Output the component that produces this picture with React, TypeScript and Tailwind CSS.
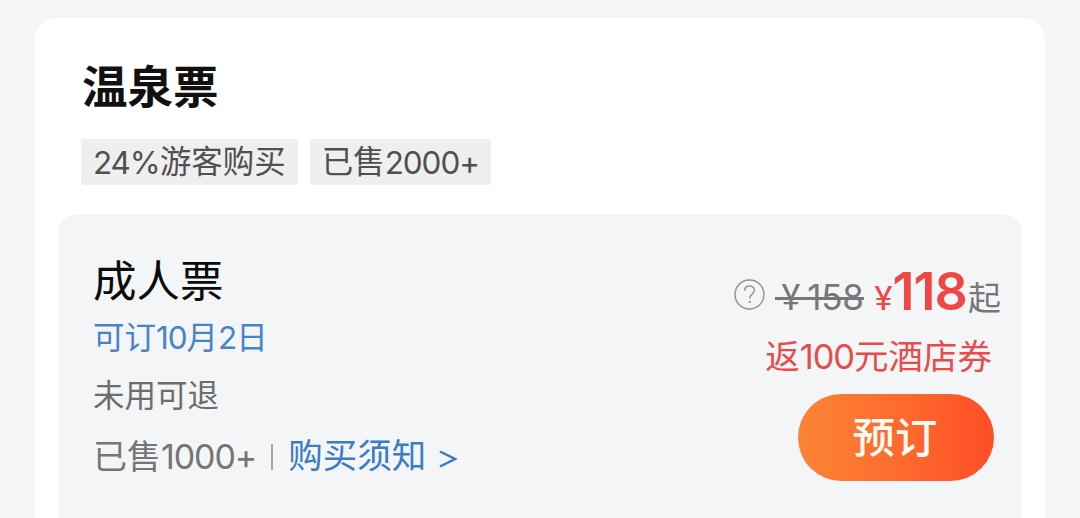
import type { ReactNode } from "react";

const Num = ({ children }: { children: ReactNode }) => (
  <span className="font-['Inter'] tracking-[-1.1px]">{children}</span>
);

const Tag = ({ children }: { children: ReactNode }) => (
  <span className="flex h-[46px] items-center rounded-[3px] bg-[#efefef] px-3 pt-px text-[31.5px] text-[#505050]">
    {children}
  </span>
);

export default function App() {
  return (
    <main className="h-[518px] w-[1080px] overflow-hidden bg-[#f5f5f5] px-[35px] pt-[18px] font-['Roboto','Noto_Sans_CJK_SC',sans-serif] whitespace-nowrap">
      <section className="h-[520px] rounded-t-[22px] bg-white px-[23px] pt-[40px]">
        <h1 className="ml-[24px] h-[62px] text-[45.5px] leading-[62px] font-bold text-[#111]">
          温泉票
        </h1>

        <div className="mt-[19px] ml-[23px] flex gap-3">
          <Tag>
            <Num>24%</Num>游客购买
          </Tag>
          <Tag>
            已售<Num>2000+</Num>
          </Tag>
        </div>

        <div className="mt-[29px] flex h-[320px] w-[964px] justify-between rounded-t-[20px] bg-[#f3f5f7] pr-[21px] pl-[35px]">
          <div className="pt-[39px]">
            <h2 className="h-[59px] text-[43.5px] leading-[60px] text-[#0c0c0c]">
              成人票
            </h2>
            <p className="h-[53px] text-[31.5px] leading-[52px] text-[#4783c8]">
              可订<Num>10</Num>月<Num>2</Num>日
            </p>
            <p className="h-[63px] text-[31.5px] leading-[63px] text-[#6d6d6d]">
              未用可退
            </p>
            <div className="flex h-[58px] items-center text-[34px] text-[#757575]">
              <span>
                已售<Num>1000+</Num>
              </span>
              <span className="mx-[15px] h-[26px] w-[2px] bg-[#a4a6a8]" />
              <a className="text-[34.5px] text-[#3b7cc9]">购买须知</a>
              <svg
                className="mt-[3px] ml-[13px] h-[18px] w-[18px]"
                viewBox="0 0 18 18"
                fill="none"
                stroke="#3b7cc9"
                strokeWidth="2.5"
              >
                <path d="M1 1.5 16 9 1 16.5" />
              </svg>
            </div>
          </div>

          <div className="flex flex-col items-end pt-[47px]">
            <div className="flex h-[67px] items-baseline text-[#777]">
              <svg
                className="mr-[10px] h-[31px] w-[31px] self-center"
                viewBox="0 0 31 31"
                fill="none"
                stroke="#929496"
                strokeWidth="1.5"
              >
                <circle cx="15.5" cy="15.5" r="14.5" />
                <path d="M10.8 11.7c0-3 2-4.7 4.8-4.7s4.8 1.8 4.8 4.3c0 3.7-4.7 4.1-4.7 8.2" />
                <path d="M15.7 22v2" strokeWidth="2" />
              </svg>
              <span className="relative mr-[11px] flex pl-[6px] font-['Inter'] text-[35px] leading-[62px] tracking-[-0.3px]">
                ¥<span className="ml-[7px]">158</span>
                <span className="absolute top-[31px] left-0 h-[3px] w-full bg-[#777]" />
              </span>
              <span className="text-[34px] text-[#ee4744]">¥</span>
              <span className="font-['Inter'] text-[52px] leading-[62px] font-semibold tracking-[-0.9px] text-[#ee4744]">
                118
              </span>
              <span className="ml-[1px] text-[33px]">起</span>
            </div>
            <p className="mr-[9px] h-[58px] text-[34.5px] leading-[58px] text-[#e74c4d]">
              返<Num>100</Num>元酒店券
            </p>
            <button className="mt-[8px] mr-[7px] h-[87px] w-[196px] rounded-full bg-linear-to-r from-[#fb8436] to-[#fe4d26] pt-[3px] pr-[2px] text-[42.5px] font-medium text-[#fffaf2]">
              预订
            </button>
          </div>
        </div>
      </section>
    </main>
  );
}
